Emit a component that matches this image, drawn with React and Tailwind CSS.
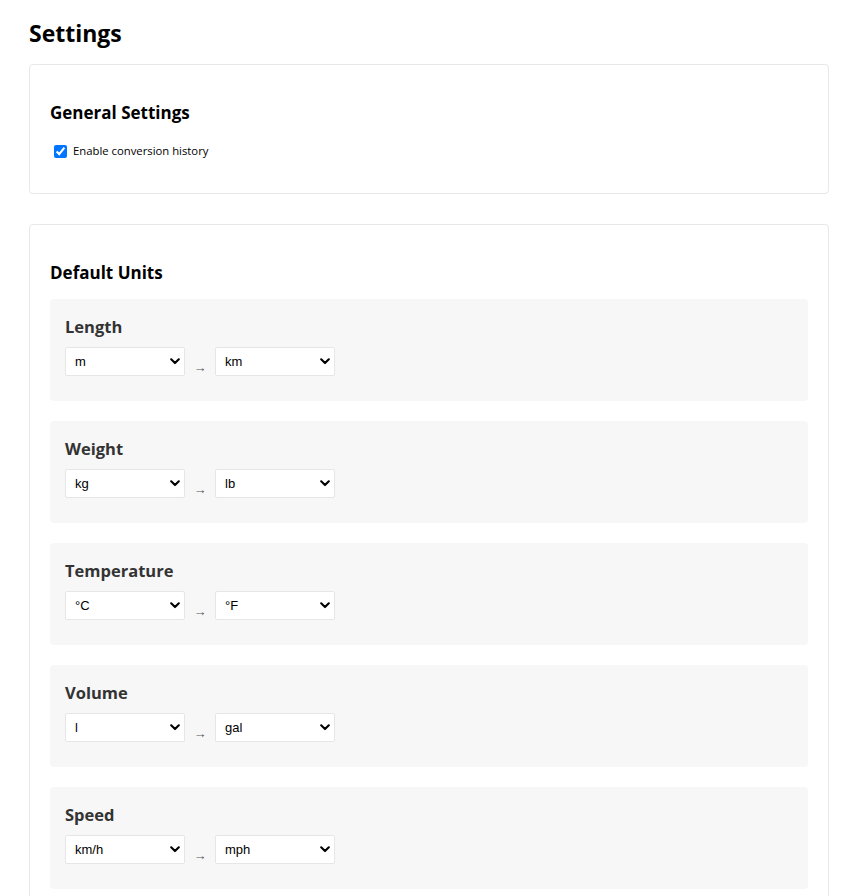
import React from "react";

const units = [
  { label: "Length", from: "m", to: "km", fromOpts: ["m", "cm", "mm", "km", "in", "ft", "yd", "mi"], toOpts: ["km", "m", "cm", "mm", "in", "ft", "yd", "mi"] },
  { label: "Weight", from: "kg", to: "lb", fromOpts: ["kg", "g", "lb", "oz"], toOpts: ["lb", "kg", "g", "oz"] },
  { label: "Temperature", from: "°C", to: "°F", fromOpts: ["°C", "°F", "K"], toOpts: ["°F", "°C", "K"] },
  { label: "Volume", from: "l", to: "gal", fromOpts: ["l", "ml", "gal"], toOpts: ["gal", "l", "ml"] },
  { label: "Speed", from: "km/h", to: "mph", fromOpts: ["km/h", "mph", "m/s"], toOpts: ["mph", "km/h", "m/s"] },
];

function Select({ value, options }) {
  return (
    <div className="relative w-[120px] h-[29px]">
      <select
        defaultValue={value}
        className="appearance-none w-full h-full bg-white border border-[#e6e6e6] rounded-[2px] pl-[9px] pr-6 text-[13px] text-black outline-none"
        style={{ fontFamily: '"Liberation Sans", Arial, sans-serif' }}
      >
        {options.map((o) => (
          <option key={o} value={o}>{o}</option>
        ))}
      </select>
      <svg
        className="pointer-events-none absolute right-[5px] top-[11px]"
        width="10"
        height="7"
        viewBox="0 0 10 7"
        fill="none"
      >
        <path d="M1.2 1.3 L5 5.1 L8.8 1.3" stroke="#000" strokeWidth="2.1" strokeLinecap="round" strokeLinejoin="round" />
      </svg>
    </div>
  );
}

export default function App() {
  return (
    <div
      className="bg-white min-h-[896px] pl-[29px] pr-[17px] pt-[19px]"
      style={{ fontFamily: '"Open Sans", "Noto Sans", sans-serif' }}
    >
      <h1 className="text-[23px] font-bold leading-[28px] text-black m-0">Settings</h1>

      <div className="mt-[17px] border border-[#e8e8e8] rounded-[4px] bg-white px-5 pt-5 pb-5">
        <h3 className="mt-[17px] text-[17px] font-bold leading-[22px] text-black">General Settings</h3>
        <label className="mt-[19px] mb-[14px] flex items-center h-[16px] text-[11.3px] text-black leading-[16px]">
          <input type="checkbox" defaultChecked className="w-[13px] h-[13px] ml-[4px] mr-[6px] accent-[#0075ff]" />
          <span>Enable conversion history</span>
        </label>
      </div>

      <div className="mt-[30px] border border-[#e8e8e8] rounded-[4px] bg-white px-5 pt-5 pb-5">
        <h3 className="mt-[17px] text-[17px] font-bold leading-[22px] text-black">Default Units</h3>
        <div className="mt-[15px] flex flex-col gap-5">
          {units.map((u) => (
            <div key={u.label} className="bg-[#f7f7f7] rounded-[4px] p-[15px]">
              <div className="text-[16.5px] font-bold leading-[26px] text-[#333] mb-[7px]">{u.label}</div>
              <div className="flex items-center mb-[10px]">
                <Select value={u.from} options={u.fromOpts} />
                <span className="w-[30px] text-center text-[13px] text-[#555] mt-[10px] leading-[16px]">→</span>
                <Select value={u.to} options={u.toOpts} />
              </div>
            </div>
          ))}
        </div>
      </div>
    </div>
  );
}
